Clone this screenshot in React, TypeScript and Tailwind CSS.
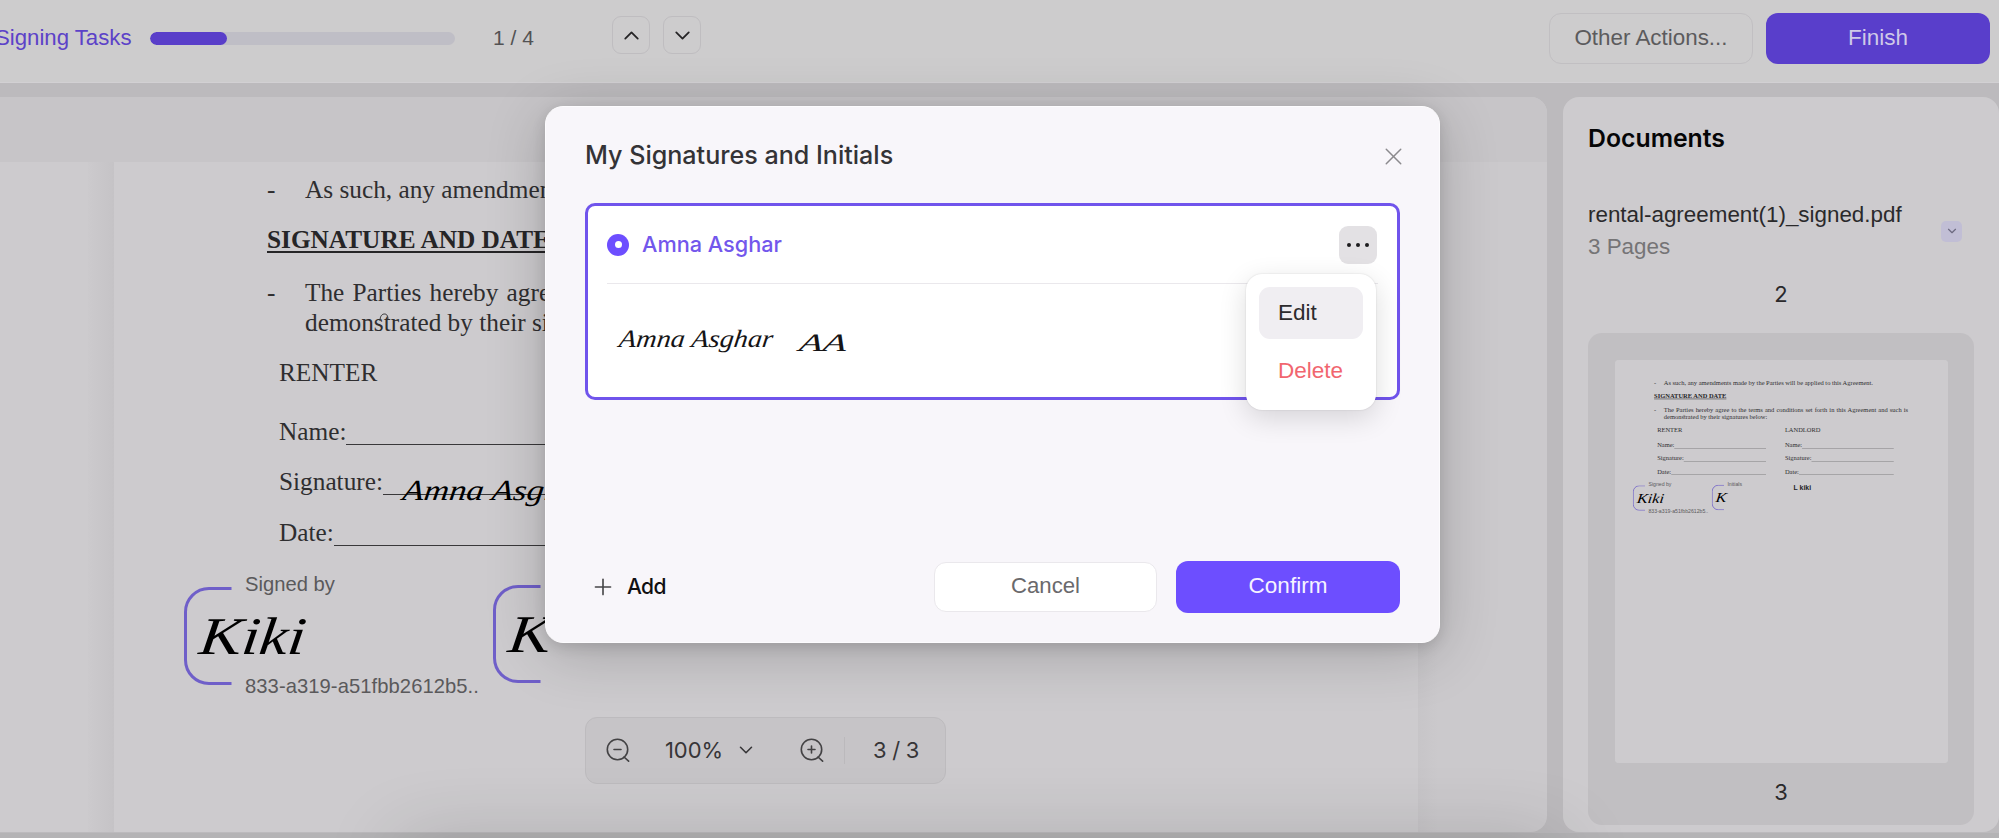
import React from "react";
import { ChevronDown, ChevronUp, Plus, X } from "lucide-react";

const ui = "[font-family:'Liberation_Sans',Arial,sans-serif]";
const display = "[font-family:Inter,sans-serif]";
const serif = "[font-family:'Liberation_Serif',serif]";
const script = "italic [font-family:'Liberation_Serif',cursive]";

function Header() {
  return (
    <header className="flex h-[83px] shrink-0 items-start border-b border-[#d2d0d3] bg-[#cdcccd] pr-[9px]">
      <div className="-ml-[5px] flex h-[76px] items-center">
        <span className="w-[137px] text-[22.200px] whitespace-nowrap text-[#5c42c8]">Signing Tasks</span>
        <div className="ml-[18px] h-[13px] w-[305px] overflow-hidden rounded-full bg-[#bfbec6]">
          <div className="h-full w-[77px] rounded-full bg-[#593ec9]" />
        </div>
        <span className="ml-[38px] w-[45px] text-[21px] whitespace-nowrap text-[#535254]">1 / 4</span>
      </div>
      <div className="mt-4 ml-[74px] flex gap-[13px]">
        <button className="flex h-[38px] w-[38px] items-center justify-center rounded-[9px] border-[1.5px] border-[#bfbdc0] text-[#252426]">
          <ChevronUp size={25} strokeWidth={1.7} />
        </button>
        <button className="flex h-[38px] w-[38px] items-center justify-center rounded-[9px] border-[1.5px] border-[#bfbdc0] text-[#252426]">
          <ChevronDown size={25} strokeWidth={1.7} />
        </button>
      </div>
      <div className="mt-[13px] ml-auto flex gap-[13px]">
        <button className="h-[51px] w-[204px] rounded-[12px] border-[1.5px] border-[#c1bfc2] pb-[2px] text-[22.400px] text-[#5c5b5d]">
          Other Actions...
        </button>
        <button className="h-[51px] w-[224px] rounded-[12px] bg-[#593ecb] pb-[2px] text-[22.500px] text-[#cfc9e8]">Finish</button>
      </div>
    </header>
  );
}

function Blank({ label, children, className = "" }: { label: string; children?: React.ReactNode; className?: string }) {
  return (
    <div className={"relative flex h-[30px] whitespace-nowrap " + className}>
      <span>{label}</span>
      <span className="mb-px flex-1 border-b-[1.5px] border-[#39383a]" />
      {children}
    </div>
  );
}

function Party({ title, signature }: { title: string; signature?: string }) {
  return (
    <div className="w-[426px]">
      <div>{title}</div>
      <Blank label="Name:" className="mt-[29px]" />
      <Blank label="Signature:" className="mt-[20px]">
        {signature && (
          <span className={"absolute top-[6px] left-[124px] origin-left scale-x-[1.2] -skew-x-6 text-[29px] leading-[36px] text-black " + script}>
            {signature}
          </span>
        )}
      </Blank>
      <Blank label="Date:" className="mt-[21px]" />
    </div>
  );
}

function Stamp({ caption, name, id, className }: { caption: string; name: string; id?: string; className: string }) {
  return (
    <div className={"absolute h-[98px] w-[310px] text-[20.2px] leading-6 whitespace-nowrap text-[#5a595b] " + className}>
      <svg className="absolute top-0 left-0" width="48" height="98" viewBox="0 0 48 98" fill="none">
        <path d="M47.500 1.500H25A23.500 23.500 0 0 0 1.500 25v48A23.500 23.500 0 0 0 25 96.500H47.500" stroke="#6f5fc9" strokeWidth="3" />
      </svg>
      <span className={"absolute top-[17px] left-[16px] origin-left scale-x-[1.2] -skew-x-6 text-[53px] leading-[64px] text-black " + script}>
        {name}
      </span>
      <span className="absolute -top-[15px] left-[61px]">{caption}</span>
      {id && <span className="absolute top-[87px] left-[61px] tracking-[0.07px]">{id}</span>}
    </div>
  );
}

function Agreement({ signature }: { signature?: string }) {
  return (
    <div className={"relative h-[1562px] w-[1304px] bg-[#cdcbce] pt-[73px] pl-[153px] text-[25.3px] leading-[30px] text-[#2f2e30] " + serif}>
      <div className="flex">
        <span className="w-[38px]">-</span>
        <span>As such, any amendments made by the Parties will be applied to this Agreement.</span>
      </div>
      <div className="mt-[20px] font-bold text-[#262527] underline decoration-2 underline-offset-[3px]">SIGNATURE AND DATE</div>
      <div className="mt-[23px] flex">
        <span className="w-[38px] shrink-0">-</span>
        <p className="w-[956px] text-justify">
          The Parties hereby agree to the terms and conditions set forth in this Agreement and such is demon
          <span className="relative">
            st
            <svg className="absolute top-[5px] left-[5px]" width="10" height="9" viewBox="0 0 10 9" fill="none">
              <path d="M1 8C1 3 3 1 5.500 1S9 3 9 7" stroke="#2f2e30" strokeWidth="1" />
            </svg>
          </span>
          rated by their signatures below:
        </p>
      </div>
      <div className="mt-[20px] flex gap-[74px] pl-[12px]">
        <Party title="RENTER" signature={signature} />
        <Party title="LANDLORD" />
      </div>
      <div className={ui}>
        <Stamp caption="Signed by" name="Kiki" id="833-a319-a51fbb2612b5.." className="top-[486px] left-[70px]" />
        <Stamp caption="Initials" name="K" className="top-[484px] left-[379px]" />
        <span className="absolute top-[480px] left-[699px] text-[27px] font-bold text-[#1d1c1e]">L kiki</span>
      </div>
    </div>
  );
}

function Magnifier({ plus }: { plus?: boolean }) {
  return (
    <svg width="24" height="24" viewBox="0 0 24 24" fill="none" stroke="#434244" strokeWidth="1.600" strokeLinecap="round">
      <circle cx="11.500" cy="11.500" r="10.200" />
      <path d="M18 19L22.600 23.200M8 11.500H15" />
      {plus && <path d="M11.500 8V15" />}
    </svg>
  );
}

function Viewer() {
  return (
    <main className="relative flex w-[1547px] flex-col overflow-hidden rounded-r-[16px] bg-[#cbc9cc]">
      <div className="h-[65px] shrink-0 bg-[#c7c5c8]" />
      <div className="flex min-h-0 flex-1">
        <div className="w-[88px] bg-[#cdcbce]" />
        <div className="w-[26px] bg-linear-to-r from-[#cccacd] to-[#c5c3c6]" />
        <div className="w-[1304px] overflow-hidden">
          <div className="-mt-[61px]">
            <Agreement signature="Amna Asghar" />
          </div>
        </div>
        <div className="w-[20px] bg-linear-to-r from-[#c7c5c8] to-[#cbc9cc]" />
      </div>
      <div className="absolute top-[620px] left-[585px] flex h-[67px] w-[361px] items-center rounded-[12px] border-[1.5px] border-[#bdbbbe] bg-[#c6c4c7] pb-[1px] text-[#363537]">
        <span className="ml-[20px]"><Magnifier /></span>
        <span className={"ml-[35px] w-[60px] text-[22px] tracking-[-0.1px] " + display}>100%</span>
        <ChevronDown className="ml-[10px]" size={22} strokeWidth={1.7} />
        <span className="ml-[43px]"><Magnifier plus /></span>
        <span className="ml-[20px] h-[27px] w-px bg-[#bbb9bc]" />
        <span className={"ml-[28px] text-[22px] tracking-[-0.3px] whitespace-nowrap " + display}>3 / 3</span>
      </div>
    </main>
  );
}

function Documents() {
  return (
    <aside className="flex w-[436px] shrink-0 flex-col rounded-[16px] bg-[#cdcbce] px-[25px]">
      <h2 className={"mt-[23px] text-[24.800px] leading-[36px] font-semibold text-[#060607] " + display}>Documents</h2>
      <div className="mt-[43px] flex items-center justify-between pr-[12px]">
        <div className="text-[22.400px] leading-[32px] whitespace-nowrap">
          <div className="text-[#2a292b]">rental-agreement(1)_signed.pdf</div>
          <div className="text-[#757476]">3 Pages</div>
        </div>
        <span className="flex h-[21px] w-[21px] items-center justify-center rounded-[5px] bg-[#c1bed5] text-[#6d6a80]">
          <ChevronDown size={14} strokeWidth={2} />
        </span>
      </div>
      <div className={"mt-[15px] text-center text-[22px] leading-[32px] text-[#2a292b] " + display}>2</div>
      <div className="mt-[23px] flex h-[492px] flex-col items-center rounded-[14px] bg-[#c1bfc2] pt-[27px]">
        <div className="h-[403px] w-[333px] overflow-hidden rounded-[4px] bg-[#cdcbce]">
          <div className="h-0 w-0 origin-top-left scale-x-[0.2555] scale-y-[0.258]">
            <Agreement />
          </div>
        </div>
        <div className={"mt-[13px] text-[22px] leading-[32px] text-[#2a292b] " + display}>3</div>
      </div>
    </aside>
  );
}

function SignatureDialog() {
  return (
    <section className="absolute top-[106px] left-[545px] flex h-[537px] w-[895px] flex-col rounded-[18px] border border-[#fdfcfe] bg-[#f8f6fa] px-[39px] shadow-[0_10px_60px_rgba(0,0,0,0.2),0_4px_14px_rgba(0,0,0,0.12)]">
      <div className="mt-[29px] flex h-[40px] items-center justify-between">
        <h1 className={"text-[25.100px] font-medium whitespace-nowrap text-[#343336] " + display}>My Signatures and Initials</h1>
        <X className="-mr-[8px] text-[#8b8a8d]" size={29} strokeWidth={1.200} />
      </div>
      <div className="relative mt-[27px] h-[197px] rounded-[10px] border-[3px] border-[#7054ec] bg-white px-[19px]">
        <div className="flex h-[78px] items-center border-b-[1.5px] border-[#eae8ec]">
          <span className="flex h-[22px] w-[22px] items-center justify-center rounded-full bg-[#6d4eff]">
            <span className="h-[7px] w-[7px] rounded-full bg-white" />
          </span>
          <span className={"ml-[13px] text-[21.700px] font-medium text-[#7357ec] " + display}>Amna Asghar</span>
          <button className="mr-px ml-auto flex h-[38px] w-[38px] items-center justify-center gap-[5px] rounded-[9px] bg-[#e3e1e4]">
            <i className="h-1 w-1 rounded-full bg-[#1d1c1e]" />
            <i className="h-1 w-1 rounded-full bg-[#1d1c1e]" />
            <i className="h-1 w-1 rounded-full bg-[#1d1c1e]" />
          </button>
        </div>
        <div className={"flex pt-[37px] pl-[12px] text-[25px] leading-[36px] whitespace-nowrap text-[#151416] " + script}>
          <span className="w-[181px] origin-left scale-x-[1.13] -skew-x-6">Amna Asghar</span>
          <span className="origin-left scale-x-[1.55] -skew-x-6 pt-[4px]">AA</span>
        </div>
        <div className="absolute top-[68px] right-[21px] flex h-[136px] w-[130px] flex-col rounded-[16px] bg-white px-[13px] pt-[13px] text-[22.500px] shadow-[0_0_2px_rgba(0,0,0,0.14),0_8px_28px_rgba(0,0,0,0.14)]">
          <div className="flex h-[52px] items-center rounded-[11px] bg-[#f0eef2] pl-[19px] text-[#2c2b2e]">Edit</div>
          <div className="mt-[6px] flex h-[52px] items-center pl-[19px] text-[#f1666f]">Delete</div>
        </div>
      </div>
      <div className="mt-[161px] flex h-[52px] items-center">
        <Plus className="ml-[5px] text-[#464548]" size={26} strokeWidth={1.500} />
        <span className={"ml-[11px] text-[21px] font-medium tracking-[-0.6px] text-[#111012] " + display}>Add</span>
        <button className="ml-auto h-[50px] w-[223px] rounded-[12px] border-[1.5px] border-[#eae8ec] bg-white pb-[2px] text-[22.200px] text-[#6a696c]">Cancel</button>
        <button className="ml-[19px] h-[52px] w-[224px] rounded-[12px] bg-[#6d4eff] pb-[2px] text-[22.500px] text-[#f6f3ff]">Confirm</button>
      </div>
    </section>
  );
}

export default function App() {
  return (
    <div className={"relative flex h-[838px] w-[1999px] flex-col overflow-hidden bg-[#bcbabd] " + ui}>
      <Header />
      <div className="flex h-[749px] shrink-0 gap-[16px] pt-[14px]">
        <Viewer />
        <Documents />
      </div>
      <div className="mt-[1px] flex-1 bg-[#b4b3b5]" />
      <div className="pointer-events-none absolute top-[848px] left-[400px] h-[40px] w-[1160px] shadow-[0_0_80px_rgba(0,0,0,0.24)]" />
      <SignatureDialog />
    </div>
  );
}
